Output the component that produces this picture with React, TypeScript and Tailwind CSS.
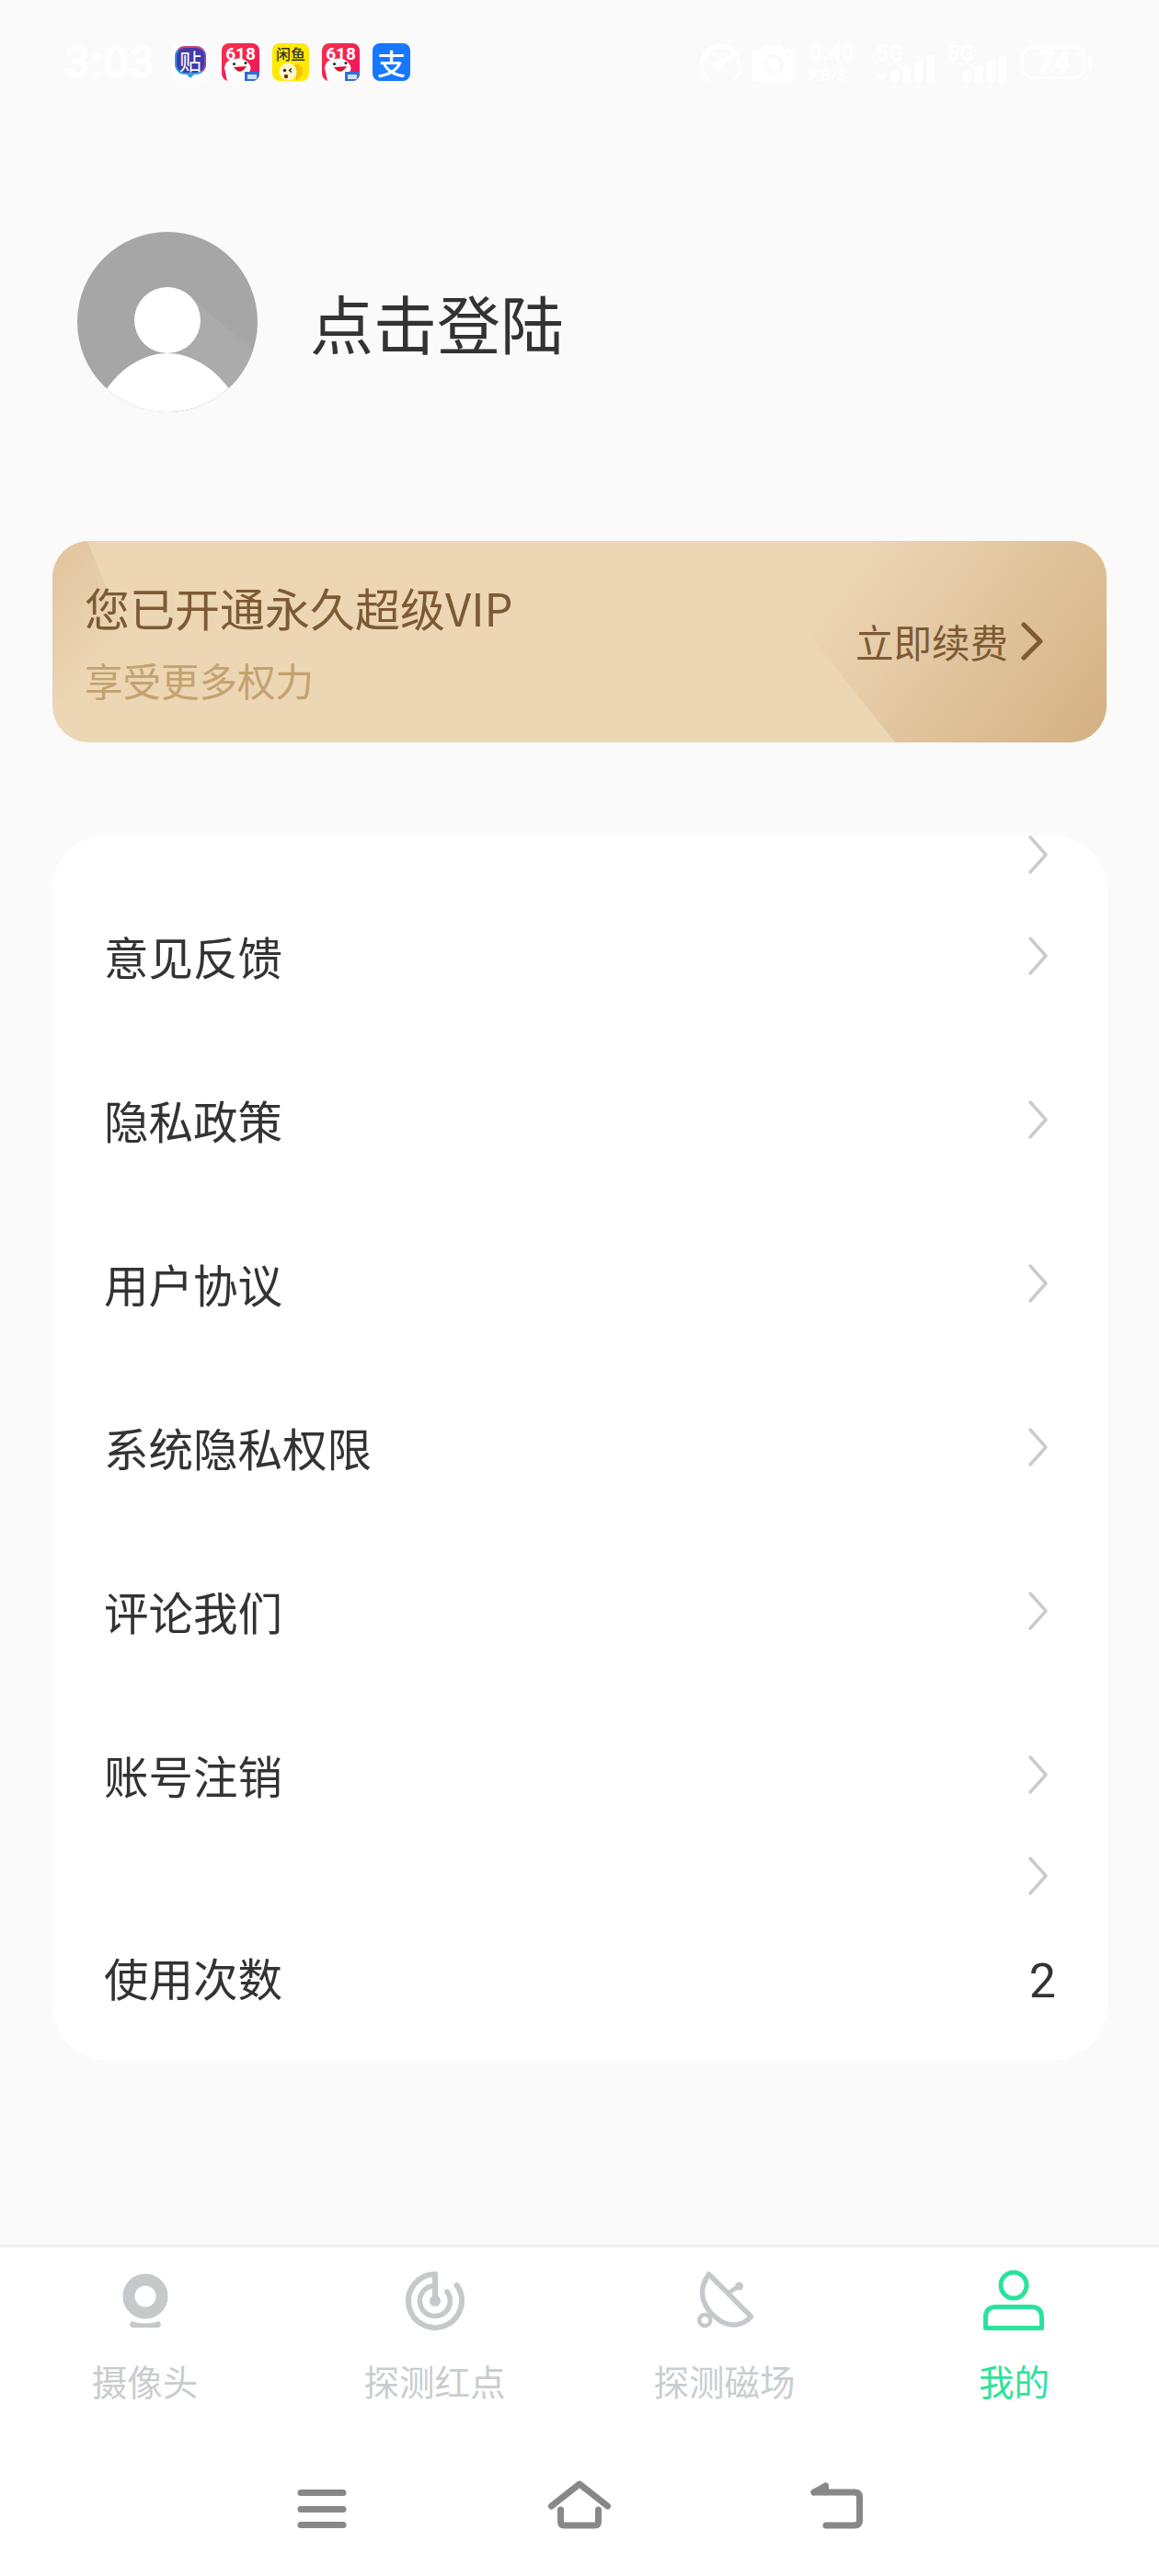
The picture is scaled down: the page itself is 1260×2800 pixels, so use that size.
const sans = "font-['Noto_Sans_CJK_SC','Noto_Sans',sans-serif]";

const menuRows = ["意见反馈", "隐私政策", "用户协议", "系统隐私权限", "评论我们", "账号注销"];

const Chevron = () => (
  <svg width="24" height="44" viewBox="0 0 24 44" fill="none" className="block">
    <path d="M3 3 L20 22 L3 41" stroke="#cbcbcb" strokeWidth="3.5" strokeLinecap="round" strokeLinejoin="round" />
  </svg>
);

const Avatar = () => (
  <svg width="196" height="196" viewBox="0 0 196 196" className="block shrink-0">
    <defs>
      <clipPath id="avatar-clip">
        <circle cx="98" cy="98" r="98" />
      </clipPath>
    </defs>
    <g clipPath="url(#avatar-clip)">
      <rect width="196" height="196" fill="#a6a6a6" />
      <path d="M130 76 L192 130 L196 196 L100 196 L100 120 Z" fill="#ababab" />
      <circle cx="98" cy="96" r="36" fill="#fff" />
      <path d="M20 196 L32.5 170 C50 145 75 132 98 132 C121 132 146 145 164.5 170 L180 196 Z" fill="#fff" />
    </g>
  </svg>
);

const TieIcon = () => (
  <div className="relative w-[40px] h-[41px] bg-white rounded-[8px] flex items-start justify-center pt-[3px]">
    <div className="w-[34px] h-[31px] rounded-[11px] bg-[#413aa8] border-2 border-l-[#2f9fe6] border-b-[#2f9fe6] border-t-[#c9457f] border-r-[#7a4fc0] flex items-center justify-center">
      <span className={`${sans} text-[24px] leading-none text-white`}>贴</span>
    </div>
    <div className="absolute bottom-[3px] left-[16px] w-0 h-0 border-x-[4px] border-x-transparent border-t-[4px] border-t-[#2f9fe6]" />
  </div>
);

const Promo618 = () => (
  <div className="relative w-[41px] h-[41px] rounded-[8px] overflow-hidden bg-[linear-gradient(135deg,#f5324a,#f0125e)]">
    <span className="absolute left-0 right-0 top-[2px] text-center font-['Roboto',sans-serif] font-bold text-[19px] leading-none text-white">618</span>
    <svg width="41" height="41" viewBox="0 0 41 41" className="absolute inset-0">
      <path d="M3 27 C4 20 8 18 11 18 C18 15 27 17 30 23 C33 27 31 31 28 33 L27 41 L6 41 Z" fill="#fff" />
      <path d="M13 26 Q20 36 27 25 Z" fill="#d5142c" />
      <circle cx="13.5" cy="22.5" r="1.5" fill="#222" />
      <circle cx="26" cy="21.5" r="1.5" fill="#222" />
      <rect x="25" y="31" width="16" height="10" fill="#2f6fd0" />
      <rect x="28" y="34" width="10" height="5" fill="#cfe0f7" />
    </svg>
  </div>
);

const XianyuIcon = () => (
  <div className="relative w-[40px] h-[41px] rounded-[8px] overflow-hidden bg-[#ffe900]">
    <span className={`${sans} absolute left-0 right-0 top-[3px] text-center text-[16px] leading-none font-medium text-[#333]`}>闲鱼</span>
    <svg width="40" height="41" viewBox="0 0 40 41" className="absolute inset-0">
      <path d="M25 22 L33 26 L33 34 L26 41 Z" fill="#f2c500" />
      <circle cx="17" cy="31" r="9.5" fill="#fff6c8" />
      <circle cx="13.5" cy="29.5" r="1.7" fill="#222" />
      <path d="M21 27.5 L18.5 29.5 L21 31.5" stroke="#222" strokeWidth="1.3" fill="none" />
      <circle cx="15" cy="36" r="2.2" fill="#7a2a10" />
    </svg>
  </div>
);

const AlipayIcon = () => (
  <div className="w-[41px] h-[41px] rounded-[8px] bg-[#1677ff] flex items-center justify-center">
    <span className={`${sans} text-[31px] leading-none font-medium text-white`}>支</span>
  </div>
);

// status bar glyphs are white on an almost white page
const Gauge = () => (
  <svg width="48" height="42" viewBox="0 0 48 42" fill="none" className="block">
    <path d="M8 39 C-2 28 2 4 24 3 C30 3 35 6 40 11" stroke="#fff" strokeWidth="5" strokeLinecap="round" />
    <path d="M42 18 C46 26 45 33 39 38" stroke="#fff" strokeWidth="3" strokeLinecap="round" opacity="0.7" />
    <path d="M40 11 L21 28 C16 31 12 24 17 21 Z" fill="#fff" />
  </svg>
);

const CameraGlyph = () => (
  <svg width="46" height="40" viewBox="0 0 46 40" className="block">
    <path fillRule="evenodd" d="M3 6 H11 L14 1 H31 L34 6 H43 Q46 6 46 9 V37 Q46 40 43 40 H3 Q0 40 0 37 V9 Q0 6 3 6 Z M23 11 A11 11 0 1 0 23.01 11 Z M23 15 A7 7 0 1 1 22.99 15 Z M38 9 A2.5 2.5 0 1 0 38.01 9 Z" fill="#fff" />
  </svg>
);

const SignalBars = ({ triangle }: { triangle?: boolean }) => (
  <div className="flex items-end">
    {triangle && <div className="w-0 h-0 mr-[4px] border-x-[6px] border-x-transparent border-t-[8px] border-t-white" />}
    <div className="flex items-end gap-[5px]">
      {[12, 17, 22, 29].map((h) => (
        <div key={h} className="w-[8px] rounded-[2px] bg-white" style={{ height: h }} />
      ))}
    </div>
  </div>
);

const StatusBar = () => (
  <div className="h-[135px] flex items-center justify-between pl-[70px] pr-[73px] shrink-0">
    <div className="flex items-center">
      <span className="font-['Roboto',sans-serif] font-bold text-[49px] leading-none text-white w-[117px]">3:03</span>
      <div className="flex items-center gap-[14px]">
        <TieIcon />
        <Promo618 />
        <XianyuIcon />
        <Promo618 />
        <AlipayIcon />
      </div>
    </div>
    <div className="flex items-center text-white font-['Roboto',sans-serif] font-bold">
      <Gauge />
      <div className="w-[10px]" />
      <CameraGlyph />
      <div className="ml-[16px] flex flex-col w-[60px]">
        <span className="text-[24px] leading-[28px]">0.40</span>
        <span className="text-[18px] leading-[21px]">KB/S</span>
      </div>
      <div className="relative ml-[13px] w-[63px] h-[42px]">
        <span className="absolute left-0 top-0 text-[23px] leading-none">5G</span>
        <div className="absolute right-0 bottom-0">
          <SignalBars triangle />
        </div>
      </div>
      <div className="relative ml-[14px] w-[64px] h-[42px]">
        <span className="absolute left-0 top-0 text-[23px] leading-none">5G</span>
        <div className="absolute right-0 bottom-0">
          <SignalBars />
        </div>
      </div>
      <div className="ml-[16px] flex items-center">
        <div className="w-[70px] h-[36px] rounded-[12px] border-[3px] border-white flex items-center justify-center italic text-[33px] leading-none">74</div>
        <div className="ml-[3px] w-[4px] h-[14px] rounded-r-[2px] bg-white" />
      </div>
    </div>
  </div>
);

const VipBanner = () => (
  <div className={`${sans} relative mt-[140px] mx-[57px] h-[219px] rounded-[40px] overflow-hidden bg-[#ecd6b4] flex items-center justify-between pl-[35px] pr-[69px] shrink-0`}>
    <svg width="1146" height="219" viewBox="0 0 1146 219" className="absolute inset-0">
      <defs>
        <linearGradient id="banner-right" gradientUnits="userSpaceOnUse" x1="860" y1="40" x2="1130" y2="240">
          <stop offset="0" stopColor="#ecd6b4" />
          <stop offset="1" stopColor="#d4b083" />
        </linearGradient>
        <linearGradient id="banner-left" gradientUnits="userSpaceOnUse" x1="0" y1="10" x2="90" y2="90">
          <stop offset="0" stopColor="#e0c49d" />
          <stop offset="1" stopColor="#ecd6b4" />
        </linearGradient>
      </defs>
      <path d="M0 0 L38 0 L84 112 L0 180 Z" fill="url(#banner-left)" />
      <path d="M900 0 L1146 0 L1146 219 L916 219 L823 102 L800 80 Z" fill="url(#banner-right)" />
    </svg>
    <div className="relative flex flex-col mt-[-1px]">
      <span className="text-[49px] leading-[60px] text-[#7d5a34]">您已开通永久超级VIP</span>
      <span className="mt-[24px] text-[41.5px] leading-[50px] text-[#c4a26f]">享受更多权力</span>
    </div>
    <div className="relative flex items-center gap-[14px] mt-[-2px]">
      <span className="text-[41.5px] leading-[50px] text-[#7d5a34]">立即续费</span>
      <svg width="24" height="42" viewBox="0 0 24 42" fill="none" className="block">
        <path d="M3 3 L21 21 L3 39" stroke="#7d5a34" strokeWidth="5" strokeLinecap="round" strokeLinejoin="round" />
      </svg>
    </div>
  </div>
);

const MenuCard = () => (
  <div className={`${sans} mt-[101px] mx-[56px] rounded-[60px] bg-white flex flex-col shrink-0 text-[48.5px] text-[#333]`}>
    <div className="h-[42px] flex items-center justify-end pr-[63px]">
      <Chevron />
    </div>
    {menuRows.map((label) => (
      <div key={label} className="h-[178px] flex items-center justify-between pl-[57px] pr-[63px]">
        <span className="leading-[60px]">{label}</span>
        <Chevron />
      </div>
    ))}
    <div className="h-[42px] flex items-center justify-end pr-[63px]">
      <Chevron />
    </div>
    <div className="h-[179px] pb-[1px] flex items-center justify-between pl-[57px] pr-[56px]">
      <span className="leading-[60px]">使用次数</span>
      <span className="mt-[10px] font-['Roboto',sans-serif] text-[52px] leading-[60px]">2</span>
    </div>
  </div>
);

const TabIcon = ({ name, color }: { name: string; color: string }) => (
  <svg width="72" height="72" viewBox="0 0 72 72" fill="none" stroke={color} className="block">
    {name === "camera" && (
      <>
        <circle cx="36" cy="32" r="18" strokeWidth="13" />
        <path d="M21 59 Q36 64 51 59 L53 62 Q53 66 49 66 H23 Q19 66 19 62 Z" fill={color} stroke="none" />
      </>
    )}
    {name === "radar" && (
      <g strokeWidth="6" strokeLinecap="round">
        <path d="M36 8 A29 29 0 1 0 59.5 20" />
        <path d="M36 20.5 A16.5 16.5 0 1 0 49 27" strokeWidth="5.5" />
        <path d="M36 8 V37" />
        <circle cx="36" cy="37" r="6" fill={color} stroke="none" />
      </g>
    )}
    {name === "dish" && (
      <g strokeWidth="5.5" strokeLinecap="round" strokeLinejoin="round">
        <path d="M18.7 8 L64.5 54 C56 64 42 66 30 58 C14 47 4 28 18.7 8 Z" />
        <path d="M41.5 27 L51.5 21" strokeWidth="4.5" />
        <circle cx="51.5" cy="21" r="4.5" fill={color} stroke="none" />
        <circle cx="14.3" cy="58" r="6" strokeWidth="4.5" />
      </g>
    )}
    {name === "me" && (
      <g strokeWidth="5">
        <circle cx="35" cy="20" r="14" />
        <path d="M4.5 66.5 V55 Q4.5 43.5 16 43.5 H54 Q65.5 43.5 65.5 55 V66.5 Z" strokeLinejoin="round" />
      </g>
    )}
  </svg>
);

const tabs = [
  { name: "camera", label: "摄像头" },
  { name: "radar", label: "探测红点" },
  { name: "dish", label: "探测磁场" },
  { name: "me", label: "我的", active: true },
];

const TabBar = () => (
  <div className={`${sans} border-t-4 border-[#f0f0f0] bg-white shrink-0`}>
    <div className="grid grid-cols-4 pt-[21px]">
      {tabs.map((t) => (
        <div key={t.name} className="flex flex-col items-center">
          <TabIcon name={t.name} color={t.active ? "#2ae39b" : "#c5c9cc"} />
          <span className={`mt-[28px] text-[38.5px] leading-[46px] ${t.active ? "text-[#2ae39b]" : "text-[#c9cdd0]"}`}>{t.label}</span>
        </div>
      ))}
    </div>
    <div className="mt-[84px] h-[106px] flex justify-center items-start">
      <div className="w-[280px] flex justify-center pt-[11px]">
        <svg width="54" height="44" viewBox="0 0 54 44" fill="none" stroke="#888" strokeWidth="7" strokeLinecap="round" className="block">
          <path d="M4 4.5 H50 M4 22.5 H50 M4 39.5 H50" />
        </svg>
      </div>
      <div className="w-[280px] flex justify-center pt-[1px]">
        <svg width="70" height="56" viewBox="0 0 70 56" fill="none" stroke="#888" strokeWidth="7" strokeLinecap="round" strokeLinejoin="round" className="block">
          <path d="M4.5 29 L35 5 L65.5 29" />
          <path d="M14.5 33 V46 Q14.5 50 18.5 50 H51.5 Q55.5 50 55.5 46 V33" />
        </svg>
      </div>
      <div className="w-[280px] flex justify-center pt-[1px]">
        <svg width="64" height="56" viewBox="0 0 64 56" fill="none" stroke="#888" strokeWidth="7" strokeLinecap="round" strokeLinejoin="round" className="block">
          <path d="M7 14 L19.5 7 V14" />
          <path d="M7 14 H51 Q56.5 14 56.5 19.5 V44.5 Q56.5 50 51 50 H20" />
        </svg>
      </div>
    </div>
  </div>
);

export default function App() {
  return (
    <div className="w-[1260px] h-[2800px] bg-[#fafafa] flex flex-col overflow-hidden">
      <StatusBar />
      <div className="mt-[117px] pl-[84px] flex items-center gap-[57px] shrink-0">
        <Avatar />
        <span className={`${sans} text-[69px] leading-[80px] text-[#333]`}>点击登陆</span>
      </div>
      <VipBanner />
      <MenuCard />
      <div className="flex-1" />
      <TabBar />
    </div>
  );
}
